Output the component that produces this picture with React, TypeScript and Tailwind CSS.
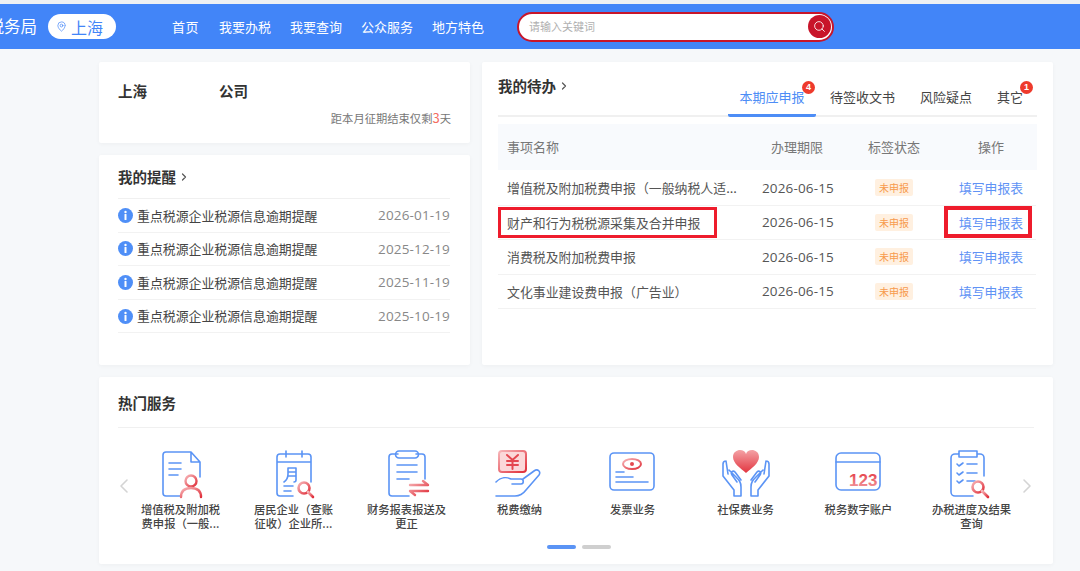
import { Search, ChevronRight, ChevronLeft, MapPin } from "lucide-react";

const cjk = "font-['Noto_Sans_CJK_SC','Noto_Sans',sans-serif]";

const reminders = ["2026-01-19", "2025-12-19", "2025-11-19", "2025-10-19"];

const todos = [
  { name: "增值税及附加税费申报（一般纳税人适...", marked: false },
  { name: "财产和行为税税源采集及合并申报", marked: true },
  { name: "消费税及附加税费申报", marked: false },
  { name: "文化事业建设费申报（广告业）", marked: false },
];

const Defs = () => (
  <svg width="0" height="0" className="absolute">
    <defs>
      <linearGradient id="red" x1="0" y1="0" x2="1" y2="1">
        <stop offset="0" stopColor="#f7b5b8" />
        <stop offset="1" stopColor="#e02f3a" />
      </linearGradient>
      <linearGradient id="heart" x1="0" y1="0" x2="0" y2="1">
        <stop offset="0" stopColor="#f4a2a6" />
        <stop offset="1" stopColor="#e2353f" />
      </linearGradient>
      <linearGradient id="num" x1="0" y1="0" x2="0" y2="1">
        <stop offset="0" stopColor="#e2353f" />
        <stop offset="1" stopColor="#f4a2a6" />
      </linearGradient>
    </defs>
  </svg>
);

const blue = { fill: "none", stroke: "#5b94f5", strokeWidth: 1.6, strokeLinecap: "round", strokeLinejoin: "round" } as const;
const red = { fill: "none", stroke: "url(#red)", strokeWidth: 2, strokeLinecap: "round", strokeLinejoin: "round" } as const;

const IconVat = () => (
  <svg width="50" height="50" viewBox="0 0 50 50">
    <path {...blue} d="M24 47H10a3 3 0 0 1-3-3V6a3 3 0 0 1 3-3h25l9 10v15M35 3v10h9M13 14h12M13 20h12M13 26h9" />
    <circle cx="35" cy="32" r="5.5" {...red} strokeWidth="2.4" />
    <path {...red} strokeWidth="2.4" d="M25 48c0-6 4-9 10-9s10 3 10 9" />
  </svg>
);
const IconResident = () => (
  <svg width="50" height="50" viewBox="0 0 50 50">
    <path {...blue} d="M24 47H11a3 3 0 0 1-3-3V8a3 3 0 0 1 3-3h28a3 3 0 0 1 3 3v25M8 13h34M17 2v6M33 2v6M15 37h9M15 42h7M19 19v6c0 4-1 6-4 8M19 19h8v12c0 1-1 2-2 2M19 23h8M19 27h8" />
    <circle cx="35" cy="39" r="5.5" {...red} strokeWidth="2.6" />
    <path {...red} strokeWidth="2.6" d="M39 43l5 5" />
  </svg>
);
const IconReport = () => (
  <svg width="50" height="50" viewBox="0 0 50 50">
    <path {...blue} d="M27 47H10a3 3 0 0 1-3-3V8a3 3 0 0 1 3-3h6M34 5h6a3 3 0 0 1 3 3v22M17 2h16a2 2 0 0 1 0 7H17a2 2 0 0 1 0-7zM15 16h20M15 23h20M15 30h12" />
    <path {...red} strokeWidth="2.4" d="M28 36h18l-5-4M46 42H28l5 4" />
  </svg>
);
const IconPay = () => (
  <svg width="50" height="50" viewBox="0 0 50 50">
    <rect x="4" y="2" width="27" height="21" rx="3" fill="#fbd8d9" stroke="url(#red)" strokeWidth="2" />
    <path fill="none" stroke="#e4474f" strokeWidth="2" strokeLinecap="round" d="M12 6l5.500 5 5.500-5M12 12h11M12 16h11M17.500 11v9" />
    <path {...blue} d="M1 33c5-5 11-5 15-3h10c3 0 3 5 0 5h-9M1 47h19c5 0 8-2 11-6l13-15c2-3-1-7-5-4L28 30" />
  </svg>
);
const IconInvoice = () => (
  <svg width="50" height="50" viewBox="0 0 50 50">
    <rect x="2" y="4" width="44" height="37" rx="4" {...blue} />
    <path {...blue} d="M8 23h8M8 28h17M8 33h32" />
    <ellipse cx="24" cy="15" rx="9" ry="5" fill="none" stroke="url(#red)" strokeWidth="2" />
    <circle cx="24" cy="15" r="2" fill="#e4474f" />
  </svg>
);
const IconSocial = () => (
  <svg width="50" height="50" viewBox="0 0 50 50">
    <path fill="url(#heart)" d="M25 24C19 19 12 14 12 8c0-5 4-7 7-7 3 0 5 1 6 4 1-3 3-4 6-4 3 0 7 2 7 7 0 6-7 11-13 16z" />
    <path {...blue} d="M5 12c-2 0-3 1-3 3v12l11 14v6h7v-9c0-5-2-7-5-10l-7-7M5 12l2 13M16 33l-5-7c-2-3 1-5 3-3l6 8" />
    <path {...blue} d="M45 12c2 0 3 1 3 3v12L37 41v6h-7v-9c0-5 2-7 5-10l7-7M45 12l-2 13M34 33l5-7c2-3-1-5-3-3l-6 8" />
  </svg>
);
const IconDigital = () => (
  <svg width="50" height="50" viewBox="0 0 50 50">
    <rect x="2" y="4" width="44" height="37" rx="5" {...blue} />
    <path {...blue} d="M2 13h44" />
    <text x="15" y="37" fontSize="17" fontWeight="700" fontFamily="Liberation Sans, sans-serif" fill="url(#num)">123</text>
  </svg>
);
const IconProgress = () => (
  <svg width="50" height="50" viewBox="0 0 50 50">
    <path {...blue} d="M26 47H8a4 4 0 0 1-4-4V9a4 4 0 0 1 4-4h3M30 5h3a4 4 0 0 1 4 4v18M12 2h18v6H12zM10 15l2 2 4-3M20 15h10M10 24l2 2 4-3M20 24h10M10 32l2 2 4-3M20 32h8" />
    <circle cx="31" cy="38" r="5.500" {...red} strokeWidth="2.6" />
    <path {...red} strokeWidth="2.6" d="M35 42l6 6" />
  </svg>
);

const services = [
  { icon: <IconVat />, label: "增值税及附加税费申报（一般..." },
  { icon: <IconResident />, label: "居民企业（查账征收）企业所..." },
  { icon: <IconReport />, label: "财务报表报送及更正" },
  { icon: <IconPay />, label: "税费缴纳" },
  { icon: <IconInvoice />, label: "发票业务" },
  { icon: <IconSocial />, label: "社保费业务" },
  { icon: <IconDigital />, label: "税务数字账户" },
  { icon: <IconProgress />, label: "办税进度及结果查询" },
];

const InfoDot = () => (
  <svg width="15" height="15" viewBox="0 0 15 15" className="shrink-0">
    <circle cx="7.5" cy="7.5" r="7.5" fill="#4f8ff7" />
    <circle cx="7.5" cy="4" r="1.2" fill="#fff" />
    <rect x="6.5" y="6" width="2" height="6" rx="0.5" fill="#fff" />
  </svg>
);

const Header = () => (
  <div className="pt-1 bg-[#eef0f3]">
    <header className="h-[45px] bg-[#4285f8] flex items-center text-white overflow-hidden">
      <span className="text-[16.5px] w-[37px] shrink-0 flex justify-end overflow-hidden whitespace-nowrap">税务局</span>
      <span className="ml-[11px] w-[68px] h-[25px] rounded-full bg-white text-[#4285f8] text-[16px] flex items-center pl-[8px] gap-[4px] shrink-0">
        <MapPin size={11} strokeWidth={1.5} />
        上海
      </span>
      <nav className="ml-[56px] flex gap-[19px] text-[13px] w-[311px] shrink-0 whitespace-nowrap">
        <span className="mr-[1px] tracking-[0.5px]">首页</span>
        <span>我要办税</span>
        <span>我要查询</span>
        <span>公众服务</span>
        <span>地方特色</span>
      </nav>
      <div className="ml-[34px] w-[317px] h-[30px] rounded-full bg-white border-2 border-[#c8152a] flex items-center justify-between pl-[10px] pr-[1px] shrink-0">
        <span className="text-[11px] text-[#b0b0b0]">请输入关键词</span>
        <span className="w-[23px] h-[23px] rounded-full bg-[#c8152a] flex items-center justify-center">
          <Search size={13} color="#fff" strokeWidth={1.6} />
        </span>
      </div>
    </header>
  </div>
);

const Company = () => (
  <section className="h-[81px] bg-white rounded-[2px] shadow-[0_1px_4px_rgba(0,0,0,0.04)] px-[19px] pt-[19px]">
    <div className="flex text-[14.5px] font-bold text-[#333] leading-[20px]">
      <span className="w-[101px]">上海</span>
      <span>公司</span>
    </div>
    <p className="mt-[9px] text-right text-[11.3px] text-[#777] leading-[16px]">
      距本月征期结束仅剩<span className="text-[#f56c5f] text-[13px]">3</span>天
    </p>
  </section>
);

const Reminders = () => (
  <section className="h-[210px] bg-white rounded-[2px] shadow-[0_1px_4px_rgba(0,0,0,0.04)] pl-[19px] pr-[20px] pt-[12px]">
    <h2 className="h-[32px] flex items-start gap-[2px] text-[14.5px] leading-[20px] font-bold text-[#333] border-b border-[#f0f0f0]">
      我的提醒
      <ChevronRight size={12} strokeWidth={2.4} className="text-[#555] mt-[4px]" />
    </h2>
    {reminders.map((date) => (
      <div key={date} className="h-[33.6px] border-b border-[#f2f2f2] flex items-center text-[12.9px]">
        <InfoDot />
        <span className="ml-[4px] text-[#444] flex-1">重点税源企业税源信息逾期提醒</span>
        <span className="text-[#888] font-['Open_Sans',sans-serif] text-[13.5px] tracking-[0.15px]">{date}</span>
      </div>
    ))}
  </section>
);

const Tab = ({ label, className, badge }: { label: string; className: string; badge?: React.ReactNode }) => (
  <div className={`relative flex justify-center items-start h-[34px] pt-[4px] leading-[20px] text-[13px] ${className}`}>
    {label}
    {badge}
  </div>
);

const Badge = ({ text, className }: { text: string; className: string }) => (
  <span className={`absolute top-[-2px] w-[13px] h-[13px] rounded-full bg-[#ee3a2c] text-white text-[9px] leading-[13px] font-bold flex items-center justify-center font-['Liberation_Sans',sans-serif] ${className}`}>
    {text}
  </span>
);

const Todos = () => (
  <section className="h-[303px] bg-white rounded-[2px] shadow-[0_1px_4px_rgba(0,0,0,0.04)] px-[16px] pt-[14px]">
    <div className="h-[41px] flex items-start justify-between border-b-2 border-[#f0f0f0]">
      <h2 className="flex items-start gap-[2px] text-[14.5px] font-bold text-[#333] leading-[20px]">
        我的待办
        <ChevronRight size={12} strokeWidth={2.4} className="text-[#555] mt-[4px]" />
      </h2>
      <div className="flex items-end self-end -mb-[2px] pr-[14px]">
        <Tab label="本期应申报" className="w-[88px] mr-[14px] text-[#4d8df6] border-b-[3px] border-[#4d8df6] rounded-b-[2px]" badge={<Badge text="4" className="right-[1px]" />} />
        <Tab label="待签收文书" className="w-[65px] mr-[25px] text-[#444]" />
        <Tab label="风险疑点" className="w-[52px] mr-[25px] text-[#444]" />
        <Tab label="其它" className="w-[26px] text-[#444]" badge={<Badge text="1" className="right-[-10px]" />} />
      </div>
    </div>
    <div className="mt-[7px] h-[46px] bg-[#f8fafd] flex items-center text-[13px] text-[#777]">
      <span className="pl-[9px] w-[273px]">事项名称</span>
      <span className="w-[97px]">办理期限</span>
      <span className="w-[110px]">标签状态</span>
      <span>操作</span>
    </div>
    <div className="w-[538px] mt-[1px]">
      {todos.map((row) => (
        <div key={row.name} className="relative h-[34.5px] border-b border-[#f2f2f2] flex items-center text-[12.9px] text-[#555]">
          {row.marked && <span className="absolute left-0 top-[1px] w-[219px] h-[31px] border-[3px] border-[#ee1c2c]" />}
          <span className="pl-[9px] w-[264px] truncate">{row.name}</span>
          <span className="w-[113px] font-['Open_Sans',sans-serif] text-[13.5px] tracking-[0.15px] text-[#555]">2026-06-15</span>
          <span className="w-[38px] h-[17px] rounded-[2px] bg-[#fff0e0] text-[#f79a4c] text-[10px] flex items-center justify-center mr-[46px]">未申报</span>
          <span className="text-[#5f93f5] text-[12.8px] whitespace-nowrap">填写申报表</span>
          {row.marked && <span className="absolute left-[446px] top-0 w-[88px] h-[32px] border-[4px] border-[#ee1c2c]" />}
        </div>
      ))}
    </div>
  </section>
);

const Services = () => (
  <section className="h-[187px] bg-white rounded-[2px] shadow-[0_1px_4px_rgba(0,0,0,0.04)] px-[19px] pt-[16px]">
    <h2 className="h-[35px] text-[14.5px] font-bold text-[#333] border-b border-[#f0f0f0] leading-[20px]">热门服务</h2>
    <div className="relative mt-[22px] grid grid-cols-8 px-[6px]">
      <ChevronLeft size={24} strokeWidth={1.6} className="absolute left-[-6px] top-[24px] text-[#d4d4d4]" />
      {services.map((item) => (
        <div key={item.label} className="flex flex-col items-center">
          <div className="h-[47px] flex items-center">{item.icon}</div>
          <p className="mt-[5px] w-[84px] text-center text-[11.3px] font-medium leading-[14px] text-[#444]">{item.label}</p>
        </div>
      ))}
      <ChevronRight size={24} strokeWidth={1.6} className="absolute right-[-5px] top-[24px] text-[#d4d4d4]" />
    </div>
    <div className="mt-[15px] pl-[6px] flex justify-center gap-[6px]">
      <span className="w-[29px] h-[4px] rounded-full bg-[#5b94f5]" />
      <span className="w-[29px] h-[4px] rounded-full bg-[#cfcfcf]" />
    </div>
  </section>
);

export default function App() {
  return (
    <div className={`h-[571px] w-[1080px] overflow-hidden bg-[#f6f8fa] ${cjk}`}>
      <Defs />
      <Header />
      <main className="ml-[99px] w-[954px] pt-[13px] flex flex-col gap-[12px]">
        <div className="flex gap-[12px]">
          <div className="w-[371px] flex flex-col gap-[12px]">
            <Company />
            <Reminders />
          </div>
          <div className="w-[571px]">
            <Todos />
          </div>
        </div>
        <Services />
      </main>
    </div>
  );
}
